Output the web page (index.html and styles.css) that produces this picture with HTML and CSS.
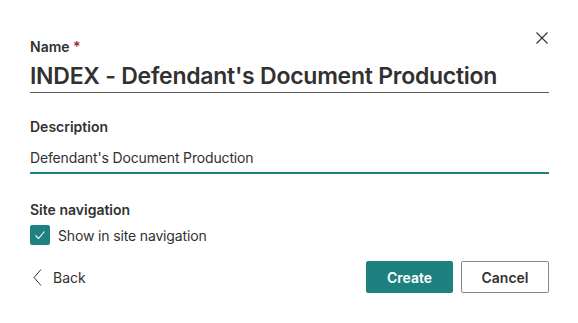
FILE: index.html
```html
<!DOCTYPE html>
<html lang="en">
<head>
    <meta charset="UTF-8">
    <meta name="viewport" content="width=device-width, initial-scale=1.0">
    <title>Edit navigation</title>
    <link rel="stylesheet" href="styles.css">
</head>
<body>
    <div id="panel">
        <button class="close" type="button" aria-label="Close">
            <svg width="12" height="12" viewBox="0 0 12 12">
                <path d="M0.5 0.5 L11.5 11.5 M11.5 0.5 L0.5 11.5" stroke="#323130" stroke-width="1.1" fill="none"/>
            </svg>
        </button>

        <div class="field name-field">
            <label class="label">Name <span class="req">*</span></label>
            <div class="title-input">INDEX - Defendant's Document Production</div>
        </div>

        <div class="field desc-field">
            <label class="label">Description</label>
            <div class="text-input">Defendant's Document Production</div>
        </div>

        <div class="field nav-field">
            <label class="label">Site navigation</label>
            <div class="check-row">
                <span class="checkbox">
                    <svg width="12" height="12" viewBox="0 0 12 12">
                        <path d="M1.5 6.5 L4.5 9.5 L10.5 2.5" stroke="#fff" stroke-width="1.1" fill="none"/>
                    </svg>
                </span>
                <span>Show in site navigation</span>
            </div>
        </div>

        <div class="footer">
            <a class="back" href="#">
                <svg width="9" height="17" viewBox="0 0 9 17">
                    <path d="M8 0.5 L1 8.5 L8 16.5" stroke="#323130" stroke-width="1" fill="none"/>
                </svg>
                <span>Back</span>
            </a>
            <div class="actions">
                <button class="btn primary" type="button">Create</button>
                <button class="btn" type="button">Cancel</button>
            </div>
        </div>
    </div>
</body>
</html>
```

FILE: styles.css
```css
body {
    font-family: Inter, "Noto Sans", sans-serif;
    color: #323130;
    background-color: #fff;
    margin: 0;
    padding: 0;
}

#panel {
    position: relative;
    padding: 38px 29px 0 30px;
}

.close {
    position: absolute;
    top: 32px;
    right: 30px;
    padding: 0;
    border: none;
    background: none;
    line-height: 0;
    cursor: pointer;
}

.label {
    display: block;
    font-size: 14px;
    font-weight: 600;
    line-height: 18px;
}

.req {
    color: #a4262c;
}

.title-input {
    font-size: 23px;
    font-weight: 600;
    letter-spacing: -0.25px;
    line-height: 31px;
    padding-top: 5px;
    border-bottom: 1px solid #605e5c;
}

.desc-field {
    margin-top: 24px;
}

.desc-field .label {
    line-height: 20px;
}

.text-input {
    font-size: 14px;
    letter-spacing: -0.15px;
    line-height: 20px;
    padding-top: 11px;
    padding-bottom: 4px;
    border-bottom: 2px solid #1e8180;
}

.nav-field {
    margin-top: 26px;
}

.nav-field .label {
    line-height: 20px;
}

.check-row {
    display: flex;
    align-items: center;
    gap: 8px;
    margin-top: 5px;
    font-size: 14px;
    letter-spacing: -0.15px;
}

.checkbox {
    width: 20px;
    height: 20px;
    border-radius: 2px;
    background-color: #1e8180;
    display: flex;
    align-items: center;
    justify-content: center;
}

.footer {
    display: flex;
    justify-content: space-between;
    align-items: center;
    margin-top: 16px;
}

.back {
    display: flex;
    align-items: center;
    gap: 11px;
    padding-left: 3px;
    color: #323130;
    text-decoration: none;
    font-size: 14px;
}

.actions {
    display: flex;
    gap: 8px;
}

.btn {
    font-family: inherit;
    font-size: 14px;
    font-weight: 600;
    color: #323130;
    height: 32px;
    width: 88px;
    background-color: #fff;
    border: 1px solid #8a8886;
    border-radius: 2px;
    cursor: pointer;
}

.btn.primary {
    width: 87px;
    background-color: #1e8180;
    border-color: #1e8180;
    color: #fff;
}
```
